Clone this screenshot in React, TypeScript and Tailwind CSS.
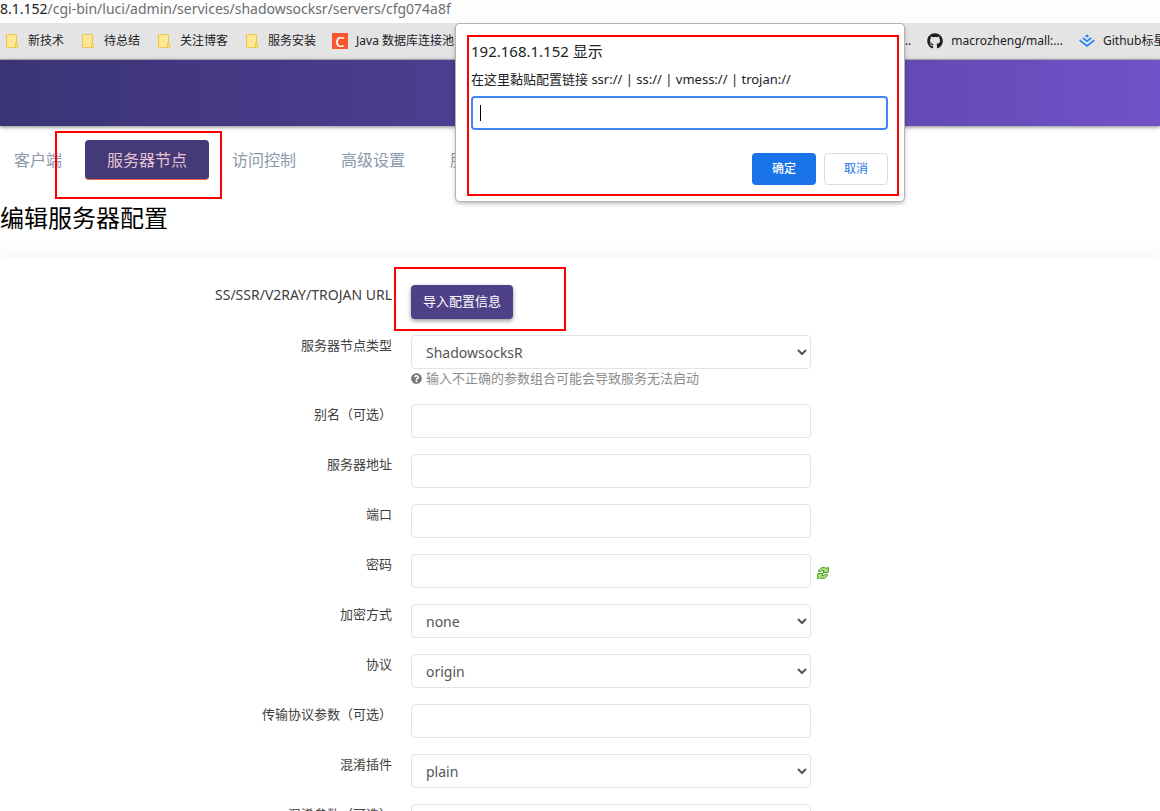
import { ReactNode, useId } from 'react';
import { FaGithub, FaQuestionCircle } from 'react-icons/fa';

type Field = {
  label: string;
  value?: string;
  hint?: string;
  reload?: boolean;
};

const fields: Field[] = [
  { label: '服务器节点类型', value: 'ShadowsocksR', hint: '输入不正确的参数组合可能会导致服务无法启动' },
  { label: '别名（可选）' },
  { label: '服务器地址' },
  { label: '端口' },
  { label: '密码', reload: true },
  { label: '加密方式', value: 'none' },
  { label: '协议', value: 'origin' },
  { label: '传输协议参数（可选）' },
  { label: '混淆插件', value: 'plain' },
  { label: '混淆参数（可选）' },
];

const folders = ['新技术', '待总结', '关注博客', '服务安装'];

function FolderIcon() {
  return (
    <svg className="h-4 w-[14px] shrink-0" viewBox="0 0 14 16" fill="#ffe694" stroke="#edc64b">
      <path d="M.5 1.5h10v13H.5z" />
      <path d="M9.5 10.5h2v4h-2z" />
    </svg>
  );
}

function JuejinIcon() {
  return (
    <svg className="h-4 w-4 shrink-0" viewBox="0 0 16 16" fill="none" stroke="#1e80ff" strokeWidth="1.7">
      <path d="M8 1.4 10 3 8 4.6 6 3z" fill="#1e80ff" stroke="none" />
      <path d="M3.8 4.8 8 8.1l4.2-3.3" />
      <path d="M.6 7.2 8 13l7.4-5.8" />
    </svg>
  );
}

function ReloadIcon() {
  return (
    <svg className="h-[14px] w-3" viewBox="0 0 12 14" fill="#b5e07c" stroke="#4a9a22" strokeLinejoin="round">
      <path d="M1.5 5.5h2.2C4.2 4.4 5.6 3.9 7 4.5L6 6.5h5.3V1.2L9.8 2.3C6.300.6 2.200 1.800 1.500 5.500z" />
      <path d="M10.500 8.500H8.300C7.800 9.600 6.400 10.100 5 9.500l1-2H.7v5.300l1.500-1.100c3.500 1.700 7.600.5 8.300-3.200z" />
    </svg>
  );
}

function Bookmark({ icon, children }: { icon: ReactNode; children: ReactNode }) {
  return (
    <a href="#" className="flex shrink-0 items-center gap-2 whitespace-nowrap">
      {icon}
      {children}
    </a>
  );
}

function BrowserBar() {
  return (
    <div className="text-[#202124]">
      <div className="h-[23px] overflow-hidden bg-[#fdfdfd] text-sm leading-[18px] whitespace-nowrap text-[#6b6e72]">
        <span className="text-[#202124]">8.1.152</span>/cgi-bin/luci/admin/services/shadowsocksr/servers/cfg074a8f
      </div>
      <div className="flex h-[37px] items-center justify-between overflow-hidden border-b border-[#b9b9bd] bg-[#e4e4e4] pl-[6px] text-xs">
        <div className="flex items-center gap-4">
          <div className="flex items-center gap-[18px]">
            {folders.map((name) => (
              <Bookmark key={name} icon={<FolderIcon />}>
                {name}
              </Bookmark>
            ))}
          </div>
          <Bookmark
            icon={
              <span className="flex h-4 w-4 items-center justify-center bg-[#fc5531] text-[15px] leading-4 font-medium text-white">
                C
              </span>
            }
          >
            Java 数据库连接池
          </Bookmark>
        </div>
        <div className="flex items-center gap-4">
          <a href="#">...</a>
          <Bookmark icon={<FaGithub className="h-4 w-4 text-[#1b1f23]" />}>macrozheng/mall:...</Bookmark>
          <div className="w-[81px] overflow-hidden">
            <Bookmark icon={<JuejinIcon />}>Github标星</Bookmark>
          </div>
        </div>
      </div>
    </div>
  );
}

function Tabs() {
  return (
    <nav className="flex gap-px pt-[14px] text-base leading-10 whitespace-nowrap text-[#8898aa]">
      <a href="#" className="pr-[22px] pl-[14px]">客户端</a>
      <div className="relative">
        <a href="#" className="block h-10 rounded border-b border-[#fb6340] bg-[#443a78] px-[22px] text-[#e6c3cf]">
          服务器节点
        </a>
        <span className="pointer-events-none absolute -top-[9px] -left-[30px] h-[68px] w-[167px] border-2 border-[#f00]" />
      </div>
      <a href="#" className="px-[22px]">访问控制</a>
      <a href="#" className="px-[22px]">高级设置</a>
      <a href="#" className="px-[22px]">服务端</a>
    </nav>
  );
}

function FieldRow({ label, value, hint, reload }: Field) {
  const id = useId();
  const box = 'block h-[34px] w-[400px] rounded border border-[#dee5e7] bg-white text-sm text-[#555]';

  return (
    <div className="flex gap-[19px]">
      <label htmlFor={id} className="w-[392px] shrink-0 text-right leading-5">{label}</label>
      <div>
        <div className="flex items-center gap-[6px]">
          {value ? (
            <select id={id} defaultValue={value} className={`${box} px-[10px]`}>
              <option>{value}</option>
            </select>
          ) : (
            <input id={id} type="text" className={`${box} px-[14px]`} />
          )}
          {reload && (
            <button type="button" aria-label="显示密码" className="pt-[3px]">
              <ReloadIcon />
            </button>
          )}
        </div>
        {hint && (
          <p className="flex h-[19px] items-center gap-1 text-[#8c8c8c]">
            <FaQuestionCircle className="h-[11px] w-[11px] text-[#777]" />
            {hint}
          </p>
        )}
      </div>
    </div>
  );
}

function PromptDialog() {
  return (
    <div
      role="dialog"
      className="absolute top-6 left-[456px] w-[448px] rounded bg-white pt-[11px] pr-[5px] pb-[5px] pl-[11px] text-[#202124] shadow-[0_0_0_1px_#b4b4b4,0_2px_5px_rgba(0,0,0,0.35)]"
    >
      <form className="border-2 border-[#f00] pt-1 pr-[9px] pb-[9px] pl-[2px]">
        <h2 className="text-[15px] leading-5">192.168.1.152 显示</h2>
        <label htmlFor="link" className="mt-2 block text-[13px] leading-5">
          在这里黏贴配置链接 ssr:// | ss:// | vmess:// | trojan://
        </label>
        <div className="relative mt-[7px]">
          <input
            id="link"
            type="text"
            autoFocus
            className="block h-[34px] w-full rounded border-2 border-[#4285f4] px-2 text-base caret-transparent outline-none"
          />
          <span className="pointer-events-none absolute top-[9px] left-[9px] h-4 w-px bg-black" />
        </div>
        <div className="mt-[23px] flex justify-end gap-2 text-xs">
          <button type="submit" className="h-8 w-16 rounded bg-[#1a73e8] font-medium text-white">确定</button>
          <button type="button" className="h-8 w-16 rounded border border-[#dadce0] text-[#1a73e8]">取消</button>
        </div>
      </form>
    </div>
  );
}

export default function App() {
  return (
    <div className="relative h-screen overflow-hidden bg-white font-['Noto_Sans','Noto_Sans_CJK_SC',sans-serif]">
      <BrowserBar />
      <header className="h-[66px] bg-linear-to-r from-[#3a3475] via-[#534099] to-[#7152c8] shadow-[0_1px_4px_rgba(0,0,0,0.5)]" />
      <Tabs />
      <h1 className="mt-5 text-2xl leading-9 text-black">编辑服务器配置</h1>
      <main className="mt-[22px] flex flex-col gap-4 pt-[27px] text-[13px] text-[#404040] shadow-[0_0_16px_rgba(136,152,170,0.15)]">
        <div className="flex gap-[19px]">
          <span className="w-[392px] shrink-0 text-right text-sm leading-5">SS/SSR/V2RAY/TROJAN URL</span>
          <div className="relative">
            <button
              type="button"
              className="block h-[34px] rounded bg-[#4e4187] px-3 text-white shadow-[0_2px_4px_rgba(0,0,0,0.4)]"
            >
              导入配置信息
            </button>
            <span className="pointer-events-none absolute -top-[18px] -left-[17px] h-16 w-[172px] border-2 border-[#f00]" />
          </div>
        </div>
        {fields.map((field) => (
          <FieldRow key={field.label} {...field} />
        ))}
      </main>
      <PromptDialog />
    </div>
  );
}
